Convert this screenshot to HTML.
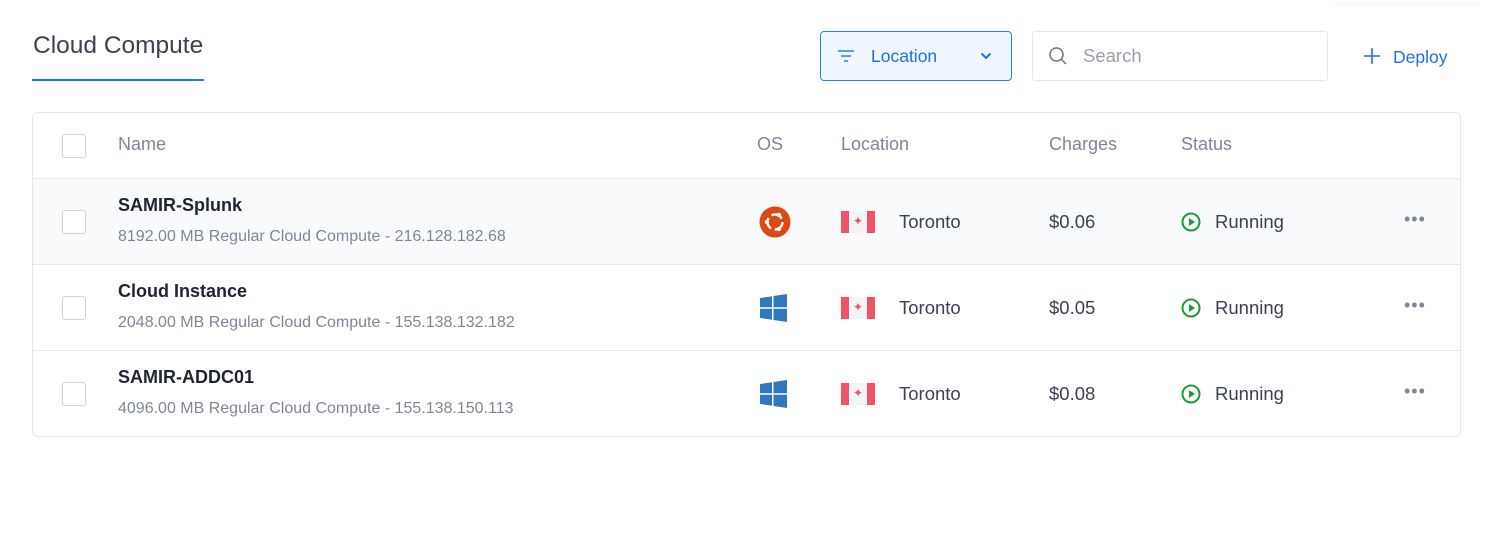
<!DOCTYPE html>
<html><head><style>
body{margin:0;width:1496px;height:556px;background:#fff;font-family:"Liberation Sans",sans-serif;position:relative;overflow:hidden}
.abs{position:absolute}
.title{left:33px;top:32px;font-size:24.5px;color:#3b4250}
.uline{left:32px;top:79px;width:172px;height:2px;background:#1976f0}
.loc{left:820px;top:31px;width:190px;height:48px;border:1px solid #2f7fe6;border-radius:4px;background:#eff6ff}
.search{left:1032px;top:31px;width:294px;height:48px;border:1px solid #e3e6ea;border-radius:4px}
.table{left:32px;top:112px;width:1427px;height:323px;border:1px solid #e3e6ea;border-radius:6px;overflow:hidden}
.row{position:absolute;left:0;width:1427px;height:86px;border-top:1px solid #e6e8ec}
.cb{position:absolute;left:29px;width:22px;height:22px;border:1px solid #cfd3da;border-radius:3px;background:#fff}
.h{position:absolute;top:21px;font-size:18px;color:#7f8797}
.nm{position:absolute;left:85px;top:16px;font-size:18px;font-weight:bold;color:#1f2430}
.sub{position:absolute;left:85px;top:49px;font-size:16px;color:#7f8797}
.t{position:absolute;top:32px;font-size:18.5px;color:#3b4250}
.flag{position:absolute;left:808px;top:32px;width:34px;height:22px;background:#f3f4f8}
.flag:before,.flag:after{content:"";position:absolute;top:0;width:8px;height:22px;background:#ee5466}
.flag:before{left:0}.flag:after{right:0}
.dots{position:absolute;left:1371px;top:30px;font-size:18px;color:#7f8797;letter-spacing:1px}
</style></head><body>
<div class="abs" style="left:1330px;top:-10px;width:150px;height:12px;border-radius:8px;box-shadow:0 2px 8px rgba(0,0,0,.06)"></div>
<div class="abs title">Cloud Compute</div>
<div class="abs uline"></div>
<div class="abs loc">
 <svg class="abs" style="left:16px;top:17px" width="18" height="14"><path d="M1 2h16M4 7h10M7 12h4" stroke="#2f7fe6" stroke-width="1.6"/></svg>
 <span class="abs" style="left:50px;top:14px;font-size:17.5px;color:#1a72e8">Location</span>
 <svg class="abs" style="left:159px;top:20px" width="12" height="8"><path d="M1.5 1.5l4.5 4.5 4.5-4.5" stroke="#1a72e8" stroke-width="2" fill="none"/></svg>
</div>
<div class="abs search">
 <svg class="abs" style="left:15px;top:14px" width="20" height="20"><circle cx="8.5" cy="8.5" r="6.5" stroke="#6b7280" stroke-width="1.5" fill="none"/><path d="M13 13l5 5" stroke="#6b7280" stroke-width="1.5"/></svg>
 <span class="abs" style="left:50px;top:13px;font-size:18.5px;color:#9aa0aa">Search</span>
</div>
<svg class="abs" style="left:1363px;top:47px" width="18" height="18"><path d="M9 1v16M1 9h16" stroke="#1a72e8" stroke-width="1.6"/></svg>
<span class="abs" style="left:1393px;top:47px;font-size:17.5px;color:#1a72e8">Deploy</span>

<div class="abs table">
 <div class="cb" style="top:21px"></div>
 <div class="h" style="left:85px">Name</div>
 <div class="h" style="left:724px">OS</div>
 <div class="h" style="left:808px">Location</div>
 <div class="h" style="left:1016px">Charges</div>
 <div class="h" style="left:1148px">Status</div>

 <div class="row" style="top:65px;background:#f9fafc">
  <div class="cb" style="top:31px"></div>
  <div class="nm">SAMIR-Splunk</div>
  <div class="sub">8192.00 MB Regular Cloud Compute - 216.128.182.68</div>
  <svg style="position:absolute;left:726px;top:27px" width="32" height="32"><circle cx="16" cy="16" r="15.5" fill="#dd4814"/><circle cx="16" cy="16" r="7.5" stroke="#fff" stroke-width="2.4" fill="none" stroke-dasharray="12 3.7"/><circle cx="8" cy="16" r="2.2" fill="#fff"/><circle cx="20" cy="9" r="2.2" fill="#fff"/><circle cx="20" cy="23" r="2.2" fill="#fff"/></svg>
  <div class="flag"><span style="position:absolute;left:12px;top:3px;color:#ee5466;font-size:12px">✦</span></div>
  <div class="t" style="left:866px">Toronto</div>
  <div class="t" style="left:1016px">$0.06</div>
  <svg style="position:absolute;left:1148px;top:33px" width="20" height="20"><circle cx="10" cy="10" r="8.5" stroke="#1f9a3a" stroke-width="2" fill="none"/><path d="M8 6v8l6-4z" fill="#1f9a3a"/></svg>
  <div class="t" style="left:1182px">Running</div>
  <div class="dots">•••</div>
 </div>

 <div class="row" style="top:151px">
  <div class="cb" style="top:31px"></div>
  <div class="nm">Cloud Instance</div>
  <div class="sub">2048.00 MB Regular Cloud Compute - 155.138.132.182</div>
  <svg style="position:absolute;left:727px;top:29px" width="28" height="28"><path d="M0 4l12-1.7v11H0zM13.5 2L27 0v13.3H13.5zM0 14.7h12v11L0 24zM13.5 14.7H27V28l-13.5-2z" fill="#2f78c0"/></svg>
  <div class="flag"><span style="position:absolute;left:12px;top:3px;color:#ee5466;font-size:12px">✦</span></div>
  <div class="t" style="left:866px">Toronto</div>
  <div class="t" style="left:1016px">$0.05</div>
  <svg style="position:absolute;left:1148px;top:33px" width="20" height="20"><circle cx="10" cy="10" r="8.5" stroke="#1f9a3a" stroke-width="2" fill="none"/><path d="M8 6v8l6-4z" fill="#1f9a3a"/></svg>
  <div class="t" style="left:1182px">Running</div>
  <div class="dots">•••</div>
 </div>

 <div class="row" style="top:237px">
  <div class="cb" style="top:31px"></div>
  <div class="nm">SAMIR-ADDC01</div>
  <div class="sub">4096.00 MB Regular Cloud Compute - 155.138.150.113</div>
  <svg style="position:absolute;left:727px;top:29px" width="28" height="28"><path d="M0 4l12-1.7v11H0zM13.5 2L27 0v13.3H13.5zM0 14.7h12v11L0 24zM13.5 14.7H27V28l-13.5-2z" fill="#2f78c0"/></svg>
  <div class="flag"><span style="position:absolute;left:12px;top:3px;color:#ee5466;font-size:12px">✦</span></div>
  <div class="t" style="left:866px">Toronto</div>
  <div class="t" style="left:1016px">$0.08</div>
  <svg style="position:absolute;left:1148px;top:33px" width="20" height="20"><circle cx="10" cy="10" r="8.5" stroke="#1f9a3a" stroke-width="2" fill="none"/><path d="M8 6v8l6-4z" fill="#1f9a3a"/></svg>
  <div class="t" style="left:1182px">Running</div>
  <div class="dots">•••</div>
 </div>
</div>
</body></html>
